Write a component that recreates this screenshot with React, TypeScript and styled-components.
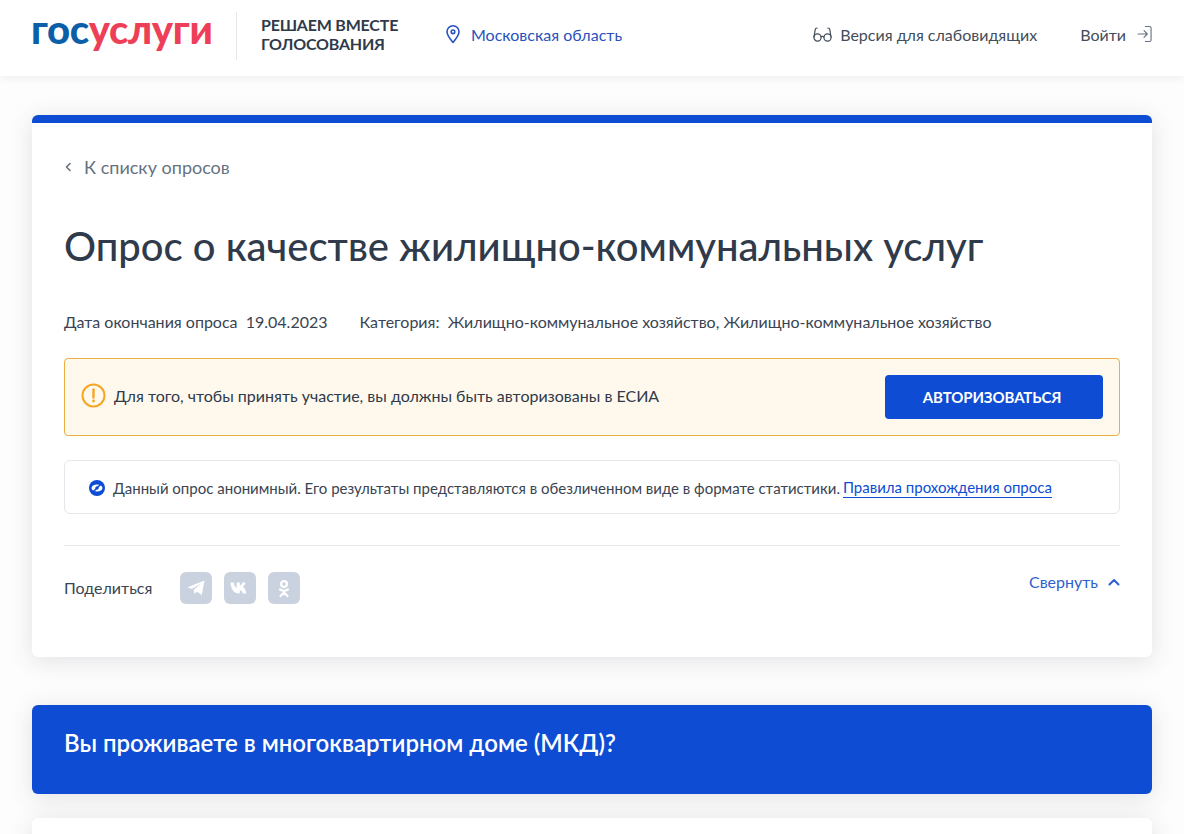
import React from "react";
import styled, { createGlobalStyle } from "styled-components";

const Global = createGlobalStyle`
  html, body { margin: 0; padding: 0; background: #fdfdfd; height: 834px; overflow: hidden; }
  body { font-family: Lato, "Noto Sans", sans-serif; color: #2f3a4a; }
  * { box-sizing: border-box; }
`;
const Header = styled.header`
  height: 76px; background: #fff; box-shadow: 0 2px 8px rgba(47,58,74,.08);
  display: flex; align-items: center; padding: 0 32px 8px 31px; position: relative;
`;
const Logo = styled.div`
  font-family: Lato, sans-serif; font-weight: 900; font-size: 40px; letter-spacing: -.35px; line-height: 40px;
  margin-top: -10px; width: 183px; white-space: nowrap;
`;
const LogoBlue = styled.span`color: #0b5ea8;`;
const LogoRed = styled.span`color: #ee3f58;`;
const VLine = styled.div`width: 1px; height: 48px; background: #e3e6ea; margin: 4px 24px 0 22px;`;
const Tagline = styled.div`
  font-weight: 700; font-size: 16px; line-height: 19px; color: #2f3a4a; width: 170px; margin-top: -1px; letter-spacing: -.2px;
`;
const Region = styled.a`
  display: flex; align-items: center; gap: 10px; color: #2a52be; font-size: 16px; margin-left: 14px;
`;
const Right = styled.div`margin-left: auto; display: flex; align-items: center; gap: 43px; font-size: 16px; color: #434d5b;`;
const Item = styled.span<{ $gap?: number }>`display: flex; align-items: center; gap: ${p => p.$gap ?? 8}px;`;
const Main = styled.main`padding: 39px 32px 0;`;
const Card = styled.section`
  background: #fff; border-top: 8px solid #0d4cd3; border-radius: 6px; height: 542px;
  box-shadow: 0 4px 24px rgba(47,58,74,.14); padding: 34px 32px 0;
`;
const Back = styled.a`display: flex; align-items: center; gap: 11px; color: #66727f; font-size: 18px; line-height: 20px;`;
const Title = styled.h1`
  margin: 46px 0 0; font-weight: 500; font-size: 40px; line-height: 46px; color: #2f3a4a;
`;
const Meta = styled.div`
  display: flex; gap: 32px; margin-top: 43px; font-size: 16px; line-height: 20px; color: #3a4452;
`;
const Alert = styled.div`
  margin-top: 26px; height: 78px; background: #fff9ed; border: 1px solid #e9ae44; border-radius: 4px;
  display: flex; align-items: center; gap: 8px; padding: 0 16px 4px; font-size: 16px; color: #2f3a4a;
`;
const AuthButton = styled.button`
  margin-left: auto; width: 218px; height: 44px; border: 0; border-radius: 4px; background: #0d4cd3; color: #fff;
  font-family: inherit; font-weight: 700; font-size: 15px; margin-top: 4px; padding: 0 4px 0 0; letter-spacing: -.1px;
`;
const Info = styled.div`
  margin-top: 24px; height: 54px; border: 1px solid #e3e6ea; border-radius: 6px; display: flex; align-items: center;
  gap: 8px; padding: 2px 24px 0; font-size: 15px; color: #3a4452;
`;
const RulesLink = styled.a`color: #0d4cd3; border-bottom: 1px solid #0d4cd3; line-height: 19px; margin-left: -5px;`;
const Divider = styled.div`height: 1px; background: #e3e6ea; margin-top: 31px;`;
const ShareRow = styled.div`display: flex; align-items: flex-start; margin-top: 26px;`;
const ShareLabel = styled.span`font-size: 16px; color: #3a4452; margin-top: 6px; width: 116px;`;
const Social = styled.span`
  width: 32px; height: 32px; border-radius: 6px; background: #c9d2de; margin-right: 12px;
  display: flex; align-items: center; justify-content: center;
`;
const Collapse = styled.a`
  margin-left: auto; display: flex; align-items: center; gap: 10px; color: #2f5fd0; font-size: 16px; margin-top: 0;
`;
const Question = styled.section`
  margin-top: 48px; height: 89px; background: #0d4cd3; border-radius: 6px; color: #fff; font-size: 24px; font-weight: 600;
  display: flex; align-items: center; padding: 0 32px 15px; box-shadow: 0 4px 24px rgba(47,58,74,.14);
`;
const NextCard = styled.section`
  margin-top: 24px; height: 100px; background: #fff; border-radius: 6px; box-shadow: 0 4px 24px rgba(47,58,74,.14);
`;

const stroke = { fill: "none", strokeLinecap: "round" as const, strokeLinejoin: "round" as const };

export default function App() {
  return (
    <>
      <Global />
      <Header>
        <Logo><LogoBlue>гос</LogoBlue><LogoRed>услуги</LogoRed></Logo>
        <VLine />
        <Tagline>РЕШАЕМ ВМЕСТЕ ГОЛОСОВАНИЯ</Tagline>
        <Region>
          <svg width="16" height="20" viewBox="0 0 16 20" {...stroke} stroke="#2a52be" strokeWidth="1.6">
            <path d="M8 18.5C5 14.8 2 11.5 2 7.8a6 6 0 0 1 12 0c0 3.7-3 7-6 10.7z" />
            <circle cx="8" cy="7.8" r="1.8" />
          </svg>
          Московская область
        </Region>
        <Right>
          <Item>
            <svg width="19" height="17" viewBox="0 0 19 17" {...stroke} stroke="#434d5b" strokeWidth="1.2">
              <circle cx="4.5" cy="11.5" r="3.6" />
              <circle cx="14.5" cy="11.5" r="3.6" />
              <path d="M8 10.8c1-.7 2-.7 3 0M1 11 2.2 3.6C2.4 2.4 3.2 2 4.2 2M18 11l-1.2-7.4C16.6 2.4 15.8 2 14.8 2" />
            </svg>
            Версия для слабовидящих
          </Item>
          <Item $gap={11}>
            Войти
            <svg width="15" height="18" viewBox="0 0 16 18" {...stroke} stroke="#66727f" strokeWidth="1.2">
              <path d="M9 1h4.5A1.5 1.5 0 0 1 15 2.5v13a1.5 1.5 0 0 1-1.5 1.5H9M1 9h10M7.5 5.5 11 9l-3.5 3.5" />
            </svg>
          </Item>
        </Right>
      </Header>
      <Main>
        <Card>
          <Back>
            <svg width="9" height="10" viewBox="0 0 9 10" {...stroke} stroke="#66727f" strokeWidth="1.6">
              <path d="M6 1.5 2.5 5 6 8.500" />
            </svg>
            К списку опросов
          </Back>
          <Title>Опрос о качестве жилищно-коммунальных услуг</Title>
          <Meta>
            <span>Дата окончания опроса&nbsp; 19.04.2023</span>
            <span>Категория:&nbsp; Жилищно-коммунальное хозяйство, Жилищно-коммунальное хозяйство</span>
          </Meta>
          <Alert>
            <svg width="25" height="25" viewBox="0 0 25 25">
              <circle cx="12.500" cy="12.500" r="11" fill="none" stroke="#f5a623" strokeWidth="2" />
              <path d="M12.500 6.500v8" stroke="#f5a623" strokeWidth="2.400" strokeLinecap="round" />
              <circle cx="12.500" cy="18" r="1.400" fill="#f5a623" />
            </svg>
            Для того, чтобы принять участие, вы должны быть авторизованы в ЕСИА
            <AuthButton>АВТОРИЗОВАТЬСЯ</AuthButton>
          </Alert>
          <Info>
            <svg width="16" height="16" viewBox="0 0 16 16">
              <circle cx="8" cy="8" r="8" fill="#0d4cd3" />
              <ellipse cx="8" cy="8" rx="5.500" ry="3.600" fill="#fff" />
              <circle cx="8" cy="8" r="1.700" fill="#0d4cd3" />
              <path d="M3 13 13 3" stroke="#0d4cd3" strokeWidth="1.600" />
            </svg>
            Данный опрос анонимный. Его результаты представляются в обезличенном виде в формате статистики.
            <RulesLink>Правила прохождения опроса</RulesLink>
          </Info>
          <Divider />
          <ShareRow>
            <ShareLabel>Поделиться</ShareLabel>
            <Social>
              <svg width="18" height="16" viewBox="0 0 18 16" fill="#fff">
                <path d="M17.500.5 14.800 15l-5-3.500-2.500 2.500-.6-4.300L14 3.500 4.700 9 .5 7.300z" />
              </svg>
            </Social>
            <Social>
              <svg width="20" height="12" viewBox="0 0 20 12" fill="#fff">
                <path d="M.5.500h3.300c.2 3.500 1.800 5 2.900 5.300V.5h3.100v3.100c1.100-.1 2.300-1.500 2.700-3.100h3.100c-.5 2.100-1.900 3.700-3 4.300 1.100.5 2.900 1.900 3.700 6.700h-3.400c-.5-1.800-1.800-3.100-3.100-3.300v3.300h-.6C4.800 11.500 1 8.500.5.500z" />
              </svg>
            </Social>
            <Social>
              <svg width="12" height="19" viewBox="0 0 12 19" {...stroke} stroke="#fff" strokeWidth="2.200">
                <circle cx="6" cy="5" r="2.900" />
                <path d="M2 10.500c2.500 1.600 5.500 1.600 8 0M6 12v1.500M6 13.500 2.500 17M6 13.500 9.500 17" />
              </svg>
            </Social>
            <Collapse>
              Свернуть
              <svg width="12" height="8" viewBox="0 0 12 8" {...stroke} stroke="#2f5fd0" strokeWidth="2">
                <path d="M1.500 6.500 6 2l4.500 4.500" />
              </svg>
            </Collapse>
          </ShareRow>
        </Card>
        <Question>Вы проживаете в многоквартирном доме (МКД)?</Question>
        <NextCard />
      </Main>
    </>
  );
}
